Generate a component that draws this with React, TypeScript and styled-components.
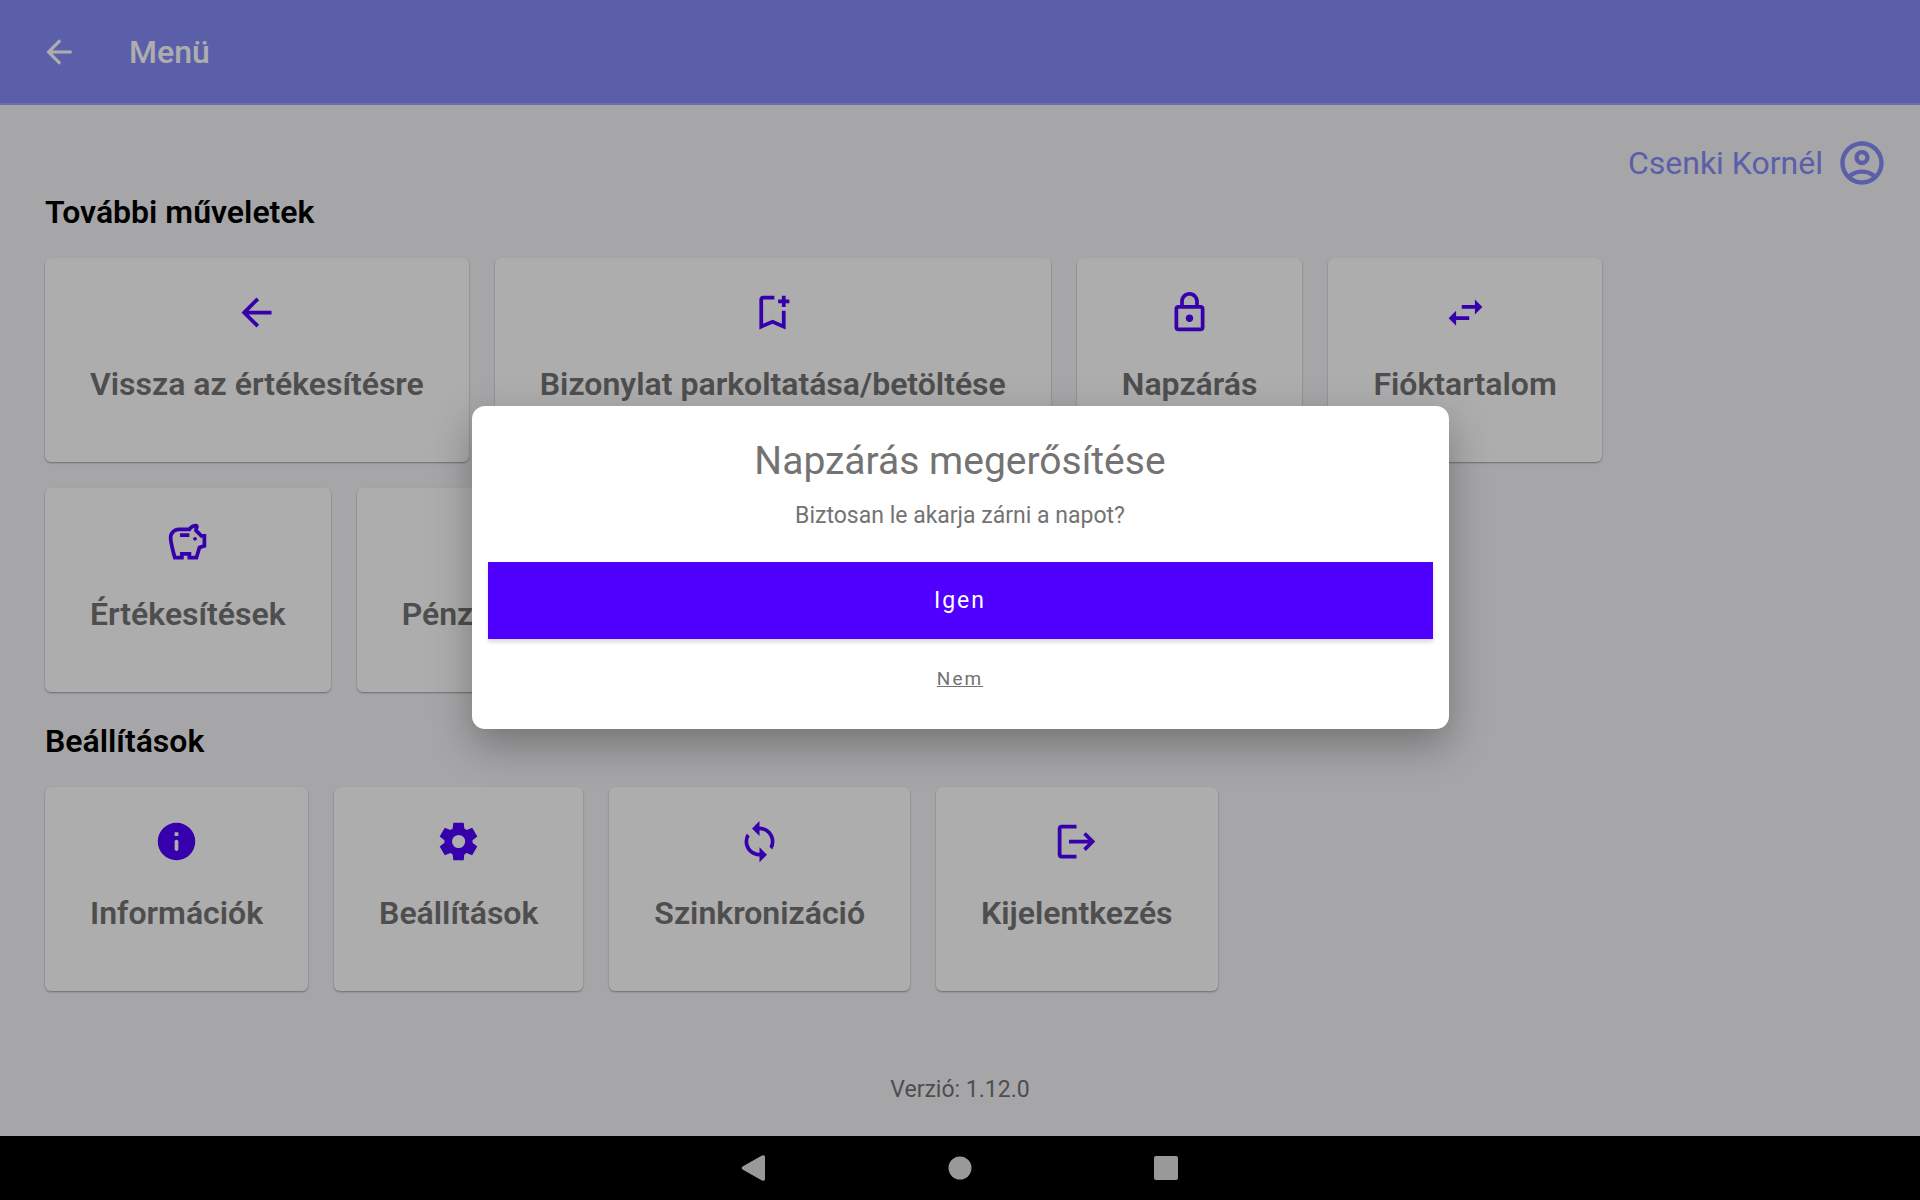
import React from 'react';
import styled, { createGlobalStyle } from 'styled-components';
import {
  MdArrowBack,
  MdLogout,
  MdOutlineAccountCircle,
  MdOutlineBookmarkAdd,
  MdOutlineSavings,
  MdSync,
} from 'react-icons/md';

const colors = {
  header: '#878cfb',
  headerLine: '#9fa3ff',
  page: '#f5f5f8',
  card: '#fff',
  accent: '#5000ff',
  muted: '#737373',
  system: '#999',
};

const GlobalStyle = createGlobalStyle`
  *, *::before, *::after { box-sizing: border-box; }
  body {
    margin: 0;
    font-family: Roboto, "Liberation Sans", sans-serif;
    background: ${colors.page};
  }
  button { font-family: inherit; }
`;

const Screen = styled.div`
  display: flex;
  flex-direction: column;
  min-height: 100vh;
`;

const AppArea = styled.div`
  position: relative;
  flex: 1;
  display: flex;
  flex-direction: column;
`;

const Header = styled.header`
  display: flex;
  align-items: center;
  gap: 51px;
  height: 105px;
  padding: 0 40px;
  background: ${colors.header};
  border-bottom: 2px solid ${colors.headerLine};
  color: #fff;
`;

const IconButton = styled.button`
  display: flex;
  padding: 0;
  border: 0;
  background: none;
  color: inherit;
  cursor: pointer;
`;

const PageTitle = styled.h1`
  margin: 0;
  font-size: 32px;
  line-height: 40px;
  font-weight: 500;
`;

const Content = styled.main`
  flex: 1;
  display: flex;
  flex-direction: column;
  padding: 32px 32px 32px 45px;
`;

const Profile = styled.button`
  display: flex;
  align-items: center;
  align-self: flex-end;
  gap: 13px;
  margin-bottom: 3px;
  padding: 0;
  border: 0;
  background: none;
  color: ${colors.header};
  font-size: 32px;
  line-height: 40px;
  cursor: pointer;
`;

const Section = styled.section`
  display: flex;
  flex-direction: column;
  gap: 26px;
  margin-bottom: 29px;
`;

const SectionTitle = styled.h2`
  margin: 0;
  font-size: 32px;
  line-height: 40px;
  font-weight: 600;
  color: #000;
`;

const TileRow = styled.div`
  display: flex;
  gap: 26px;
`;

const Tile = styled.button`
  display: flex;
  flex-direction: column;
  align-items: center;
  gap: 29px;
  height: 204px;
  padding: 32px 45px;
  border: 0;
  border-radius: 6px;
  background: ${colors.card};
  box-shadow: 0 1px 2px rgba(0, 0, 0, 0.35);
  color: ${colors.accent};
  white-space: nowrap;
  cursor: pointer;
`;

const TileLabel = styled.span`
  font-size: 32px;
  line-height: 40px;
  font-weight: 600;
  color: ${colors.muted};
`;

const Version = styled.p`
  margin: auto 0 0;
  padding-right: 13px;
  text-align: center;
  font-size: 23px;
  line-height: 28px;
  color: ${colors.muted};
`;

const Scrim = styled.div`
  position: absolute;
  inset: 0;
  display: flex;
  align-items: center;
  justify-content: center;
  padding-bottom: 2px;
  background: rgba(0, 0, 0, 0.32);
`;

const Dialog = styled.div`
  display: flex;
  flex-direction: column;
  align-items: center;
  width: 90%;
  max-width: 977px;
  padding: 32px 16px 38px;
  border-radius: 13px;
  background: #fff;
  box-shadow: 0 16px 40px rgba(0, 0, 0, 0.3);
  color: ${colors.muted};
`;

const DialogTitle = styled.h2`
  margin: 0;
  font-size: 39px;
  line-height: 46px;
  font-weight: 400;
`;

const DialogText = styled.p`
  margin: 18px 0 32px;
  font-size: 23px;
  line-height: 28px;
`;

const ConfirmButton = styled.button`
  width: 100%;
  height: 77px;
  border: 0;
  background: ${colors.accent};
  box-shadow: 0 3px 4px rgba(0, 0, 0, 0.15);
  color: #fff;
  font-size: 23px;
  letter-spacing: 2px;
  cursor: pointer;
`;

const CancelButton = styled.button`
  margin-top: 28px;
  padding: 0;
  border: 0;
  background: none;
  color: inherit;
  font-size: 19px;
  line-height: 24px;
  letter-spacing: 2px;
  text-decoration: underline;
  cursor: pointer;
`;

const SystemBar = styled.nav`
  display: flex;
  align-items: center;
  justify-content: center;
  gap: 166px;
  height: 64px;
  background: #000;
  color: ${colors.system};
`;

const PathIcon = ({ d, size = 45 }: { d: string; size?: number }) => (
  <svg width={size} height={size} viewBox="0 0 24 24" fill="currentColor" fillRule="evenodd" aria-hidden="true">
    <path d={d} />
  </svg>
);

const lockPath =
  'M18 8h-1V6c0-2.76-2.24-5-5-5S7 3.24 7 6v2H6c-1.1 0-2 .9-2 2v10c0 1.1.9 2 2 2h12c1.1 0 2-.9 2-2V10c0-1.1-.9-2-2-2zM9 6c0-1.66 1.34-3 3-3s3 1.34 3 3v2H9V6zm9 14H6V10h12v10zm-6-3c1.1 0 2-.9 2-2s-.9-2-2-2-2 .9-2 2 .9 2 2 2z';
const swapPath = 'M6.99 11L3 15l3.99 4v-3H14v-2H6.99v-3zM21 9l-3.99-4v3H10v2h7.01v3L21 9z';
const infoPath =
  'M12 2a10 10 0 1 0 0 20a10 10 0 1 0 0-20zM11 7h2v2h-2zM12 11c.55 0 1 .45 1 1v4c0 .55-.45 1-1 1s-1-.45-1-1v-4c0-.55.45-1 1-1z';
const settingsPath =
  'M9.25 22l-.4-3.2a3.8 3.8 0 0 1-.61-.3 8.2 8.2 0 0 1-.56-.38L4.7 19.38l-2.75-4.75 2.57-1.95a2.4 2.4 0 0 1-.02-.34v-.68c0-.11.01-.22.02-.34L1.95 9.37 4.7 4.63l2.98 1.25c.18-.14.37-.26.57-.38.2-.12.4-.22.6-.3L9.25 2h5.5l.4 3.2c.22.08.42.18.61.3.19.12.38.24.56.38l2.98-1.25 2.75 4.74-2.58 1.95c.02.12.03.23.03.34v.68c0 .11-.02.22-.05.34l2.57 1.95-2.75 4.75-2.95-1.26c-.18.14-.37.26-.57.38-.2.12-.4.22-.6.3l-.4 3.2zM12.05 15.5a3.5 3.5 0 1 0 0-7a3.5 3.5 0 1 0 0 7z';

type TileItem = { label: string; icon: React.ReactNode };

const operations: TileItem[][] = [
  [
    { label: 'Vissza az értékesítésre', icon: <MdArrowBack size={45} /> },
    { label: 'Bizonylat parkoltatása/betöltése', icon: <MdOutlineBookmarkAdd size={45} /> },
    { label: 'Napzárás', icon: <PathIcon d={lockPath} /> },
    { label: 'Fióktartalom', icon: <PathIcon d={swapPath} /> },
  ],
  [
    { label: 'Értékesítések', icon: <MdOutlineSavings size={45} /> },
    { label: 'Pénz', icon: null },
  ],
];

const settings: TileItem[][] = [
  [
    { label: 'Információk', icon: <PathIcon d={infoPath} /> },
    { label: 'Beállítások', icon: <PathIcon d={settingsPath} /> },
    { label: 'Szinkronizáció', icon: <MdSync size={45} /> },
    { label: 'Kijelentkezés', icon: <MdLogout size={45} /> },
  ],
];

const IconSlot = styled.span`
  display: flex;
  height: 45px;
`;

const TileSection = ({ title, rows }: { title: string; rows: TileItem[][] }) => (
  <Section>
    <SectionTitle>{title}</SectionTitle>
    {rows.map((row, i) => (
      <TileRow key={i}>
        {row.map((item) => (
          <Tile key={item.label} type="button">
            <IconSlot>{item.icon}</IconSlot>
            <TileLabel>{item.label}</TileLabel>
          </Tile>
        ))}
      </TileRow>
    ))}
  </Section>
);

export default function App() {
  return (
    <Screen>
      <GlobalStyle />
      <AppArea>
        <Header>
          <IconButton type="button" aria-label="Vissza">
            <MdArrowBack size={38} />
          </IconButton>
          <PageTitle>Menü</PageTitle>
        </Header>
        <Content>
          <Profile type="button">
            Csenki Kornél
            <MdOutlineAccountCircle size={52} />
          </Profile>
          <TileSection title="További műveletek" rows={operations} />
          <TileSection title="Beállítások" rows={settings} />
          <Version>Verzió: 1.12.0</Version>
        </Content>
        <Scrim>
          <Dialog role="dialog" aria-modal="true" aria-labelledby="dialog-title">
            <DialogTitle id="dialog-title">Napzárás megerősítése</DialogTitle>
            <DialogText>Biztosan le akarja zárni a napot?</DialogText>
            <ConfirmButton type="button">Igen</ConfirmButton>
            <CancelButton type="button">Nem</CancelButton>
          </Dialog>
        </Scrim>
      </AppArea>
      <SystemBar>
        <IconButton type="button" aria-label="Vissza">
          <svg width="40" height="40" viewBox="0 0 40 40" fill="currentColor">
            <path d="M8.500 18.500 L28 7.500 Q31 6.500 31 9 V31 Q31 33.500 28 32.500 L8.500 21.500 Q7 20 8.500 18.500Z" />
          </svg>
        </IconButton>
        <IconButton type="button" aria-label="Kezdőképernyő">
          <svg width="40" height="40" viewBox="0 0 40 40" fill="currentColor">
            <circle cx="20" cy="20" r="11.500" />
          </svg>
        </IconButton>
        <IconButton type="button" aria-label="Áttekintés">
          <svg width="40" height="40" viewBox="0 0 40 40" fill="currentColor">
            <rect x="8" y="8" width="24" height="24" rx="2" />
          </svg>
        </IconButton>
      </SystemBar>
    </Screen>
  );
}
